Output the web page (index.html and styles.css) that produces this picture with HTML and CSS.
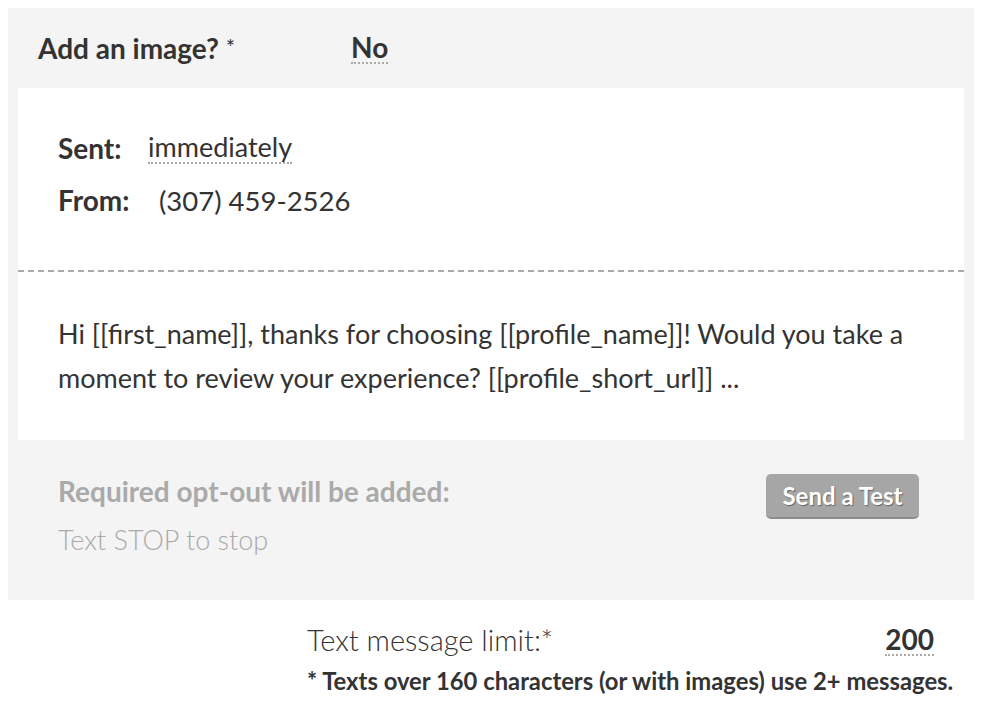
FILE: index.html
```html
<!DOCTYPE html>
<html lang="en">
<head>
  <meta charset="UTF-8" />
  <title>Text message settings</title>
  <link rel="stylesheet" href="styles.css">
</head>
<body>

  <section class="panel">
    <div class="image-row">
      <span class="image-label">Add an image? <span class="req">*</span></span>
      <span class="toggle">No</span>
    </div>

    <div class="message-card">
      <div class="meta">
        <div class="meta-row">
          <span class="meta-label">Sent:</span>
          <span class="toggle light">immediately</span>
        </div>
        <div class="meta-row">
          <span class="meta-label">From:</span>
          <span class="phone">(307) 459-2526</span>
        </div>
      </div>
      <div class="separator"></div>
      <p class="message-body">
        Hi [[first_name]], thanks for choosing [[profile_name]]! Would you take a
        moment to review your experience? [[profile_short_url]] ...
      </p>
    </div>

    <div class="optout">
      <div>
        <p class="optout-title">Required opt-out will be added:</p>
        <p class="optout-text">Text STOP to stop</p>
      </div>
      <button class="test-btn">Send a Test</button>
    </div>
  </section>

  <footer class="limit">
    <div class="limit-row">
      <span class="limit-label">Text message limit:*</span>
      <span class="toggle">200</span>
    </div>
    <p class="limit-note">* Texts over 160 characters (or with images) use 2+ messages.</p>
  </footer>

</body>
</html>
```

FILE: styles.css
```css
body {
  margin: 8px;
  font-family: 'Lato', 'Liberation Sans', sans-serif;
  font-size: 27px;
  color: #333;
  background: #fff;
}

p {
  margin: 0;
}

.panel {
  width: 946px;
  background-color: #f4f4f4;
  padding: 0 10px;
}

.image-row {
  display: flex;
  align-items: center;
  height: 80px;
  padding-left: 20px;
}

.image-label {
  width: 313px;
  font-weight: 700;
  font-size: 28px;
}

.req {
  font-weight: 400;
  font-size: 22px;
  vertical-align: 4px;
}

.toggle {
  font-weight: 700;
  font-size: 28px;
  line-height: 30px;
  border-bottom: 2px dotted #aaa;
}

.toggle.light {
  font-weight: 400;
  font-size: 27px;
}

.message-card {
  background: white;
}

.meta {
  padding: 34px 40px 44px;
}

.meta-row {
  display: flex;
  align-items: center;
  height: 52px;
}

.meta-label {
  font-weight: 700;
  font-size: 28px;
  width: 90px;
}

.meta-row:last-child .meta-label {
  width: 101px;
}

.phone {
  font-size: 27.5px;
}

.separator {
  height: 2px;
  background: repeating-linear-gradient(to right, #aaa 0 6px, transparent 6px 10px);
}

.message-body {
  padding: 40px 40px 40px;
  line-height: 44px;
}

.optout {
  display: flex;
  justify-content: space-between;
  align-items: flex-start;
  padding: 30px 45px 30px 40px;
  height: 100px;
}

.optout-title {
  font-weight: 700;
  font-size: 28px;
  color: #aaa;
  line-height: 42px;
}

.optout-text {
  font-weight: 300;
  color: #aaa;
  line-height: 56px;
}

.test-btn {
  margin-top: 4px;
  width: 153px;
  height: 45px;
  font-family: inherit;
  font-size: 24px;
  font-weight: 700;
  color: white;
  text-shadow: 1px 1px 1px #666;
  background-color: #a6a6a6;
  border: none;
  border-bottom: 2px solid #8c8c8c;
  border-radius: 5px;
  cursor: pointer;
}

.limit {
  margin-left: 299px;
  width: 646px;
  padding-top: 22px;
}

.limit-row {
  display: flex;
  justify-content: space-between;
  align-items: center;
  padding-right: 19px;
  font-weight: 300;
  font-size: 29px;
}

.limit-note {
  margin-top: 10px;
  font-weight: 700;
  font-size: 23.8px;
  white-space: nowrap;
}
```
